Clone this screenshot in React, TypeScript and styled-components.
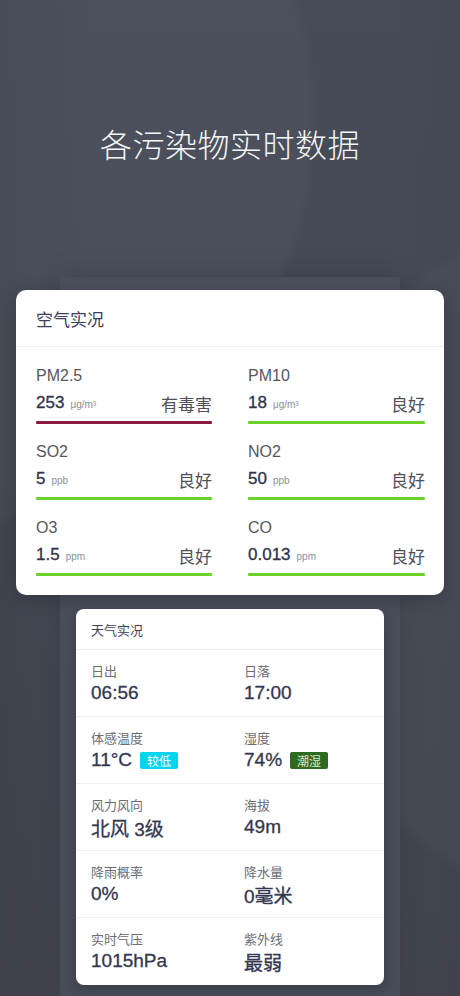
import styled, { createGlobalStyle } from "styled-components";

const GlobalStyle = createGlobalStyle`
  html, body {
    margin: 0;
    padding: 0;
    background: #454955;
  }
  * {
    box-sizing: border-box;
  }
`;

type Pollutant = {
  name: string;
  value: string;
  unit: string;
  level: string;
  color: string;
};

const pollutants: Pollutant[] = [
  { name: "PM2.5", value: "253", unit: "μg/m³", level: "有毒害", color: "#8c1b3f" },
  { name: "PM10", value: "18", unit: "μg/m³", level: "良好", color: "#6bd22b" },
  { name: "SO2", value: "5", unit: "ppb", level: "良好", color: "#6bd22b" },
  { name: "NO2", value: "50", unit: "ppb", level: "良好", color: "#6bd22b" },
  { name: "O3", value: "1.5", unit: "ppm", level: "良好", color: "#6bd22b" },
  { name: "CO", value: "0.013", unit: "ppm", level: "良好", color: "#6bd22b" },
];

type Weather = {
  label: string;
  value: string;
  tag?: { text: string; bg: string; fg: string };
};

const weatherRows: Weather[][] = [
  [
    { label: "日出", value: "06:56" },
    { label: "日落", value: "17:00" },
  ],
  [
    { label: "体感温度", value: "11°C", tag: { text: "较低", bg: "#00d5ee", fg: "#ffffff" } },
    { label: "湿度", value: "74%", tag: { text: "潮湿", bg: "#2e6a1f", fg: "#d9ecd2" } },
  ],
  [
    { label: "风力风向", value: "北风 3级" },
    { label: "海拔", value: "49m" },
  ],
  [
    { label: "降雨概率", value: "0%" },
    { label: "降水量", value: "0毫米" },
  ],
  [
    { label: "实时气压", value: "1015hPa" },
    { label: "紫外线", value: "最弱" },
  ],
];

const App = () => {
  return (
    <Page>
      <GlobalStyle />
      <Title>各污染物实时数据</Title>
      <Backdrop>
        <AirCard>
          <AirHeader>空气实况</AirHeader>
          <AirGrid>
            {pollutants.map((p) => (
              <Cell key={p.name}>
                <CellName>{p.name}</CellName>
                <ValueRow>
                  <Reading>
                    <Num>{p.value}</Num>
                    <Unit>{p.unit}</Unit>
                  </Reading>
                  <Level>{p.level}</Level>
                </ValueRow>
                <Bar $color={p.color} />
              </Cell>
            ))}
          </AirGrid>
        </AirCard>

        <WeatherCard>
          <WeatherHeader>天气实况</WeatherHeader>
          {weatherRows.map((row, i) => (
            <WeatherRow key={i}>
              {row.map((w) => (
                <WeatherItem key={w.label}>
                  <WLabel>{w.label}</WLabel>
                  <WValueLine>
                    <WValue>{w.value}</WValue>
                    {w.tag && (
                      <Tag $bg={w.tag.bg} $fg={w.tag.fg}>
                        {w.tag.text}
                      </Tag>
                    )}
                  </WValueLine>
                </WeatherItem>
              ))}
            </WeatherRow>
          ))}
        </WeatherCard>
      </Backdrop>
    </Page>
  );
};

const Page = styled.div`
  width: 460px;
  height: 996px;
  overflow: hidden;
  display: flex;
  flex-direction: column;
  align-items: center;
  font-family: "Liberation Sans", "Noto Sans CJK SC", sans-serif;
  background:
    radial-gradient(circle at -100px 120px, rgba(255, 255, 255, 0.028) 0, rgba(255, 255, 255, 0.028) 408px, transparent 418px),
    radial-gradient(circle at 640px 560px, rgba(255, 255, 255, 0.02) 0, rgba(255, 255, 255, 0.02) 350px, transparent 362px),
    linear-gradient(90deg, rgba(0, 0, 0, 0.06) 0%, transparent 20%, transparent 85%, rgba(0, 0, 0, 0.03) 100%),
    linear-gradient(180deg, #474b58 0%, #464a56 40%, #42454f 100%);
`;

const Title = styled.h1`
  margin: 0;
  padding-top: 122px;
  height: 277px;
  font-family: "Noto Sans CJK SC", sans-serif;
  font-size: 32px;
  font-weight: 300;
  line-height: 42px;
  letter-spacing: 0.5px;
  color: #f4f5f7;
`;

const Backdrop = styled.div`
  width: 340px;
  flex: 1;
  display: flex;
  flex-direction: column;
  align-items: center;
  gap: 14px;
  padding-top: 13px;
  background: linear-gradient(180deg, #4b4f5c 0%, #484c59 100%);
  box-shadow: 0 -6px 24px rgba(0, 0, 0, 0.12);
`;

const AirCard = styled.section`
  width: 428px;
  margin: 0 -44px;
  background: #ffffff;
  border-radius: 10px;
  box-shadow: 0 4px 18px rgba(0, 0, 0, 0.22);
  flex-shrink: 0;
`;

const AirHeader = styled.div`
  height: 57px;
  padding: 0 20px;
  display: flex;
  align-items: center;
  font-family: "Noto Sans CJK SC", sans-serif;
  font-size: 17px;
  color: #3d405a;
  border-bottom: 1px solid #eeeff2;
`;

const AirGrid = styled.div`
  display: grid;
  grid-template-columns: 176px 177px;
  column-gap: 36px;
  row-gap: 17px;
  padding: 18px 19px 19px 20px;
`;

const Cell = styled.div`
  display: flex;
  flex-direction: column;
`;

const CellName = styled.div`
  font-family: "Liberation Sans", "Noto Sans CJK SC", sans-serif;
  font-size: 16px;
  line-height: 22px;
  color: #55565e;
`;

const ValueRow = styled.div`
  margin-top: 4px;
  height: 24px;
  display: flex;
  align-items: center;
  justify-content: space-between;
`;

const Reading = styled.div`
  display: flex;
  align-items: baseline;
  gap: 6px;
`;

const Num = styled.span`
  font-family: "Liberation Sans", sans-serif;
  font-size: 17px;
  color: #2f3248;
  -webkit-text-stroke: 0.3px #2f3248;
`;

const Unit = styled.span`
  font-family: "Liberation Sans", sans-serif;
  font-size: 10px;
  color: #8d8e96;
`;

const Level = styled.span`
  font-family: "Noto Sans CJK SC", sans-serif;
  font-size: 17px;
  color: #4f5058;
`;

const Bar = styled.div<{ $color: string }>`
  margin-top: 6px;
  height: 3px;
  border-radius: 1px;
  background: ${(p) => p.$color};
`;

const WeatherCard = styled.section`
  width: 308px;
  background: #ffffff;
  border-radius: 8px;
  box-shadow: 0 4px 14px rgba(0, 0, 0, 0.22);
  flex-shrink: 0;
`;

const WeatherHeader = styled.div`
  height: 41px;
  padding: 0 15px;
  display: flex;
  align-items: center;
  font-family: "Noto Sans CJK SC", sans-serif;
  font-size: 13px;
  color: #3d405a;
  border-bottom: 1px solid #eeeff2;
`;

const WeatherRow = styled.div`
  display: grid;
  grid-template-columns: 153px 1fr;
  padding: 12px 15px 11px;
  height: 67px;
  border-bottom: 1px solid #eeeff2;

  &:last-child {
    border-bottom: none;
  }
`;

const WeatherItem = styled.div`
  display: flex;
  flex-direction: column;
`;

const WLabel = styled.div`
  font-family: "Noto Sans CJK SC", sans-serif;
  font-size: 13px;
  line-height: 18px;
  color: #6b6c74;
`;

const WValueLine = styled.div`
  display: flex;
  align-items: center;
  gap: 8px;
  height: 26px;
`;

const WValue = styled.span`
  font-family: "Liberation Sans", "Noto Sans CJK SC", sans-serif;
  font-size: 19px;
  color: #33364f;
  -webkit-text-stroke: 0.3px #33364f;
`;

const Tag = styled.span<{ $bg: string; $fg: string }>`
  display: inline-flex;
  align-items: center;
  justify-content: center;
  width: 38px;
  height: 17px;
  border-radius: 2px;
  font-family: "Noto Sans CJK SC", sans-serif;
  font-size: 12px;
  background: ${(p) => p.$bg};
  color: ${(p) => p.$fg};
`;

export default App;
